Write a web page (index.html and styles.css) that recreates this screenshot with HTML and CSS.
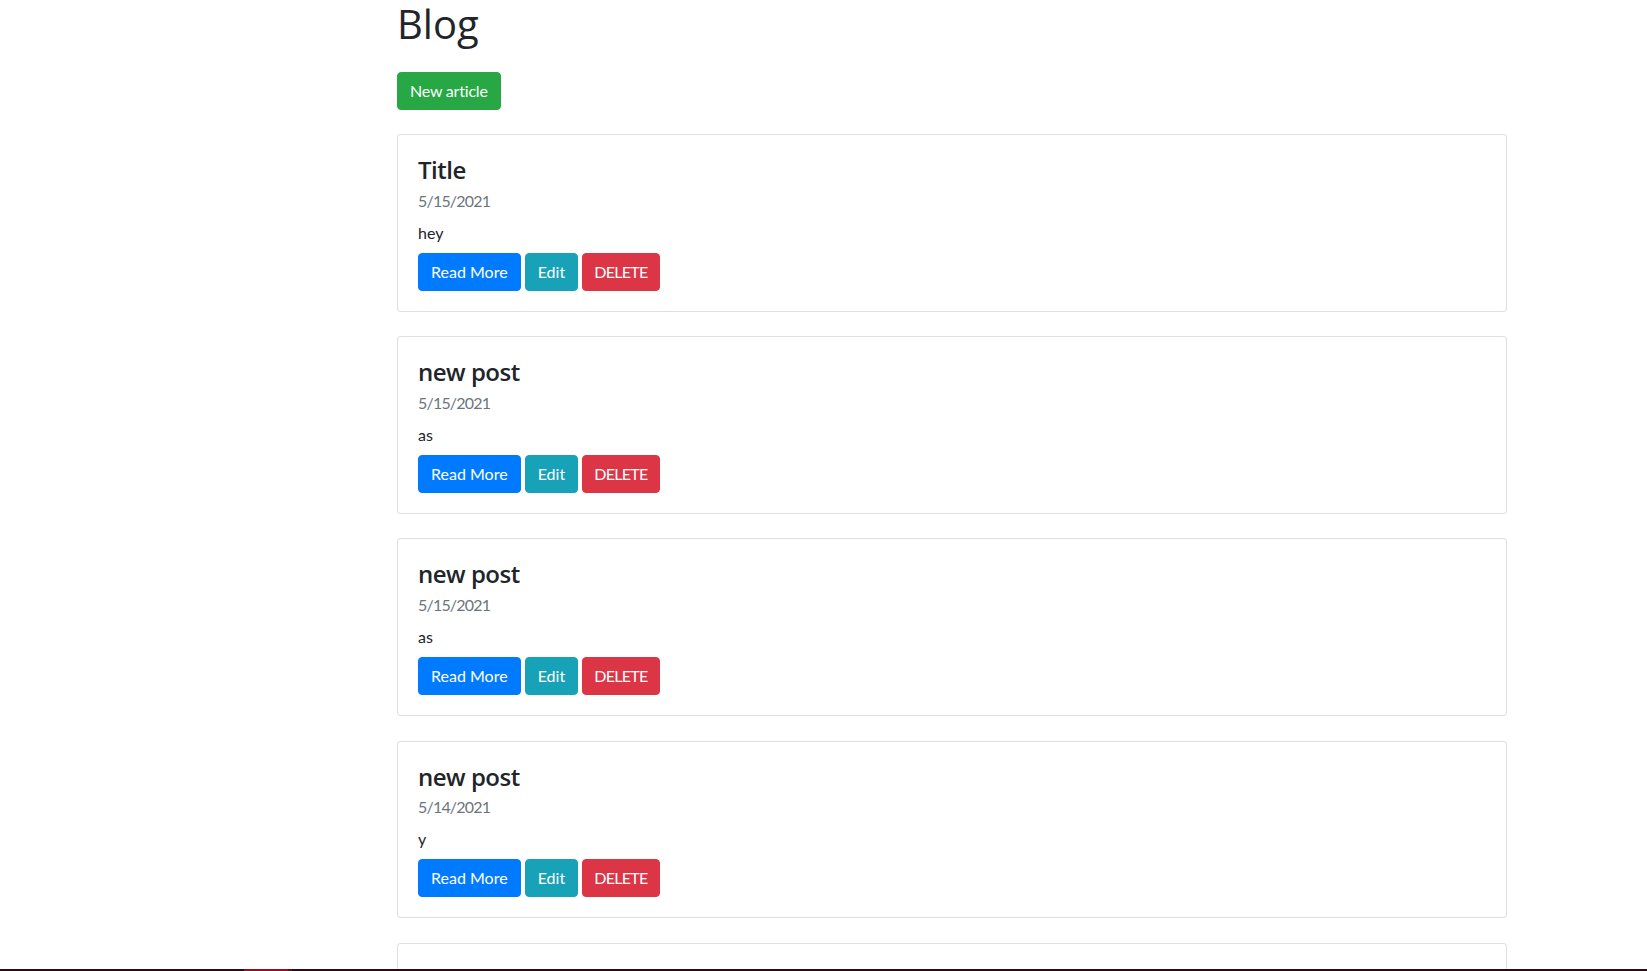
FILE: index.html
```html
<!DOCTYPE html>
<html lang="en">
<head>
<meta charset="utf-8">
<title>Blog</title>
<link rel="stylesheet" href="styles.css">
</head>
<body>
<main class="page">
  <div class="container">
    <h1 class="page-title">Blog</h1>
    <a class="btn btn-success btn-new" href="#">New article</a>
    <div class="list">
      <div class="card">
        <div class="card-body">
          <h4 class="card-title">Title</h4>
          <div class="card-subtitle">5/15/2021</div>
          <div class="card-text">hey</div>
          <div class="actions"><a class="btn btn-primary" href="#">Read More</a> <a class="btn btn-info" href="#">Edit</a> <button class="btn btn-danger">DELETE</button></div>
        </div>
      </div>
      <div class="card">
        <div class="card-body">
          <h4 class="card-title">new post</h4>
          <div class="card-subtitle">5/15/2021</div>
          <div class="card-text">as</div>
          <div class="actions"><a class="btn btn-primary" href="#">Read More</a> <a class="btn btn-info" href="#">Edit</a> <button class="btn btn-danger">DELETE</button></div>
        </div>
      </div>
      <div class="card">
        <div class="card-body">
          <h4 class="card-title">new post</h4>
          <div class="card-subtitle">5/15/2021</div>
          <div class="card-text">as</div>
          <div class="actions"><a class="btn btn-primary" href="#">Read More</a> <a class="btn btn-info" href="#">Edit</a> <button class="btn btn-danger">DELETE</button></div>
        </div>
      </div>
      <div class="card">
        <div class="card-body">
          <h4 class="card-title">new post</h4>
          <div class="card-subtitle">5/14/2021</div>
          <div class="card-text">y</div>
          <div class="actions"><a class="btn btn-primary" href="#">Read More</a> <a class="btn btn-info" href="#">Edit</a> <button class="btn btn-danger">DELETE</button></div>
        </div>
      </div>
      <div class="card card-last">
        <div class="card-body"></div>
      </div>
    </div>
  </div>
</main>
<div class="taskbar"><span class="taskbar-active"></span><span class="taskbar-edge"></span></div>
</body>
</html>
```

FILE: styles.css
```css
* { box-sizing: border-box; }

html, body {
  margin: 0;
  padding: 0;
  height: 100%;
  overflow: hidden;
}

body {
  font-family: "Lato", "Open Sans", sans-serif;
  font-size: 16px;
  line-height: 1.5;
  color: #212529;
  background: #fff;
}

.page {
  padding-left: 382px;
}

.container {
  width: 1140px;
  padding: 0 15px;
}

.page-title {
  margin: 0 0 24px;
  font-family: "Open Sans", "Lato", sans-serif;
  font-size: 40px;
  font-weight: 400;
  line-height: 1.2;
}

.btn {
  display: inline-block;
  padding: 6px 12px;
  font-family: inherit;
  font-size: 16px;
  line-height: 24px;
  font-weight: 400;
  color: #fff;
  text-decoration: none;
  border: 1px solid transparent;
  border-radius: 4px;
  vertical-align: middle;
  cursor: pointer;
}

.btn-new { letter-spacing: -0.2px; }

.btn-success { background: #28a745; border-color: #28a745; }
.btn-primary { background: #007bff; border-color: #007bff; }
.btn-info { background: #17a2b8; border-color: #17a2b8; }
.btn-danger {
  background: #dc3545;
  border-color: #dc3545;
  padding-left: 11px;
  padding-right: 11px;
  letter-spacing: -0.7px;
}

.list {
  margin-top: 24px;
}

.card {
  border: 1px solid rgba(0, 0, 0, 0.125);
  border-radius: 4px;
  margin-bottom: 24.4px;
  background: #fff;
}

.card-body {
  padding: 21px 20px 20px;
}

.card-last .card-body {
  height: 178px;
}

.card-title {
  margin: 0 0 12px;
  font-family: "Open Sans", "Lato", sans-serif;
  font-size: 24px;
  font-weight: 600;
  line-height: 1.2;
  letter-spacing: -0.5px;
}

.card-subtitle {
  margin-top: -8px;
  margin-bottom: 8px;
  color: #6c757d;
  letter-spacing: -0.8px;
}

.card-text {
  margin-bottom: 8px;
}

.taskbar {
  position: fixed;
  left: 0;
  right: 0;
  bottom: 0;
  height: 2px;
  background: #2c0b17;
}

.taskbar-active {
  position: absolute;
  left: 244px;
  width: 44px;
  top: 0;
  bottom: 0;
  background: #8e1022;
}

.taskbar-edge {
  position: absolute;
  left: 288px;
  width: 4px;
  top: 0;
  bottom: 0;
  background: #5a0d1c;
}
```
